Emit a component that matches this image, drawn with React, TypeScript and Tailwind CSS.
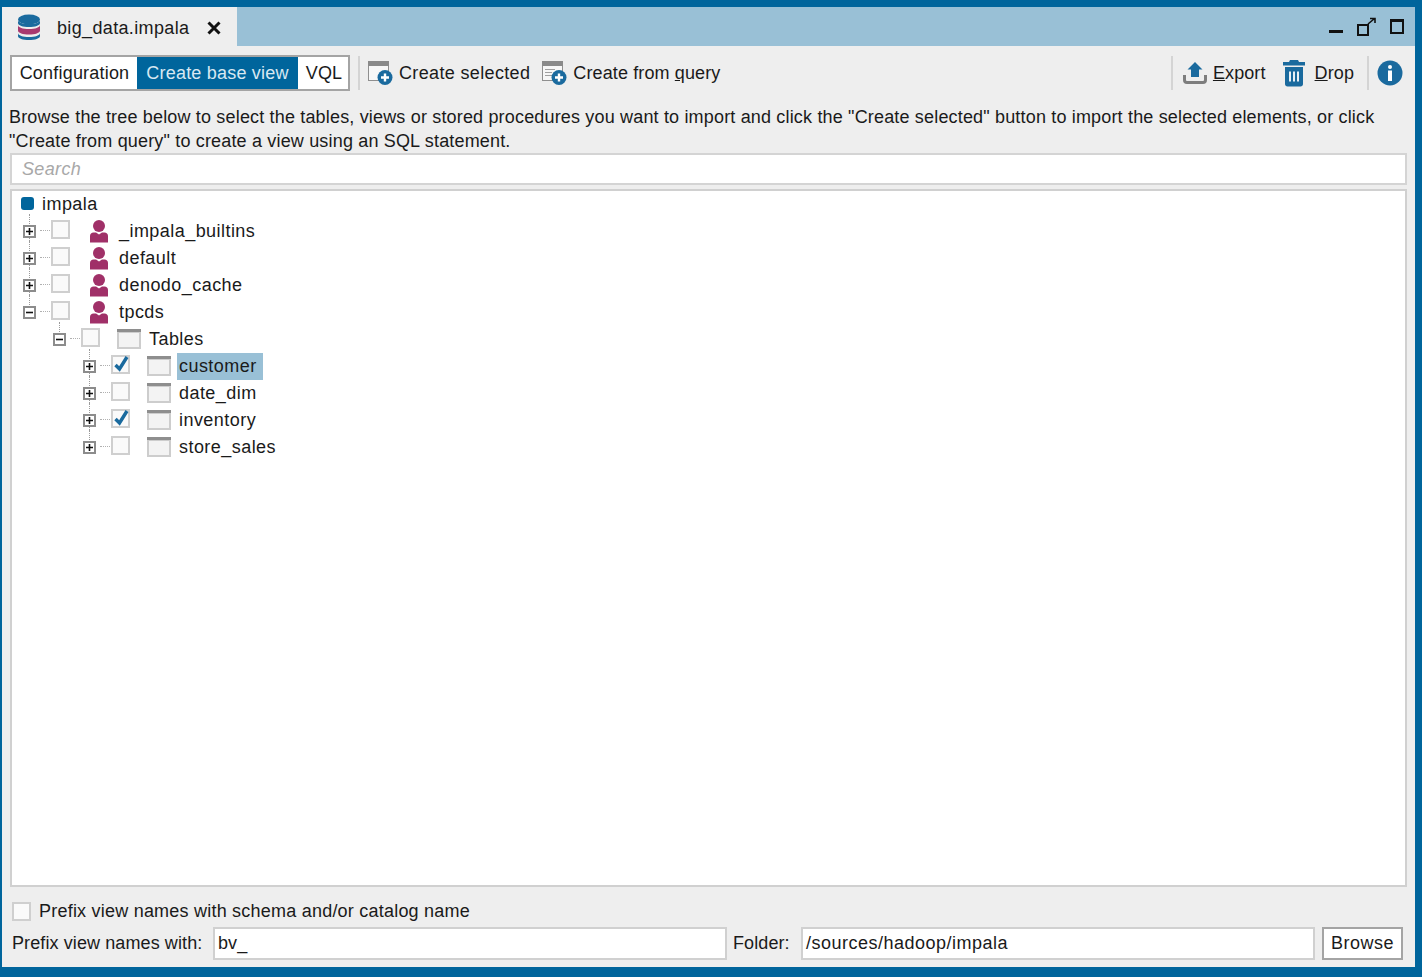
import { ReactNode } from 'react'

interface TreeNode {
  label: string
  level: number
  kind: 'schema' | 'table'
  open?: boolean
  checked?: boolean
  selected?: boolean
  // how far the dotted line reaches above the expander
  lineUp?: boolean
  lineDown?: boolean
}

const nodes: TreeNode[] = [
  { label: '_impala_builtins', level: 0, kind: 'schema', lineUp: true, lineDown: true },
  { label: 'default', level: 0, kind: 'schema', lineUp: true, lineDown: true },
  { label: 'denodo_cache', level: 0, kind: 'schema', lineUp: true, lineDown: true },
  { label: 'tpcds', level: 0, kind: 'schema', open: true, lineUp: true },
  { label: 'Tables', level: 1, kind: 'table', open: true, lineUp: true },
  { label: 'customer', level: 2, kind: 'table', checked: true, selected: true, lineUp: true, lineDown: true },
  { label: 'date_dim', level: 2, kind: 'table', lineUp: true, lineDown: true },
  { label: 'inventory', level: 2, kind: 'table', checked: true, lineUp: true, lineDown: true },
  { label: 'store_sales', level: 2, kind: 'table', lineUp: true },
]

function DatabaseIcon() {
  return (
    <svg width="24" height="28" viewBox="0 0 24 28">
      <path d="M1 20v3c0 2.500 5 4 11 4s11-1.500 11-4v-3c0 2.500-5 4-11 4S1 22.500 1 20z" fill="#1a6a9e" />
      <path d="M1 12v5.500c0 2.500 5 4 11 4s11-1.500 11-4V12c0 2.500-5 4-11 4S1 14.500 1 12z" fill="#a8396f" />
      <ellipse cx="12" cy="6.500" rx="11" ry="5" fill="#1a6a9e" />
      <path d="M1 7v3c0 2.500 5 4 11 4s11-1.500 11-4V7c0 2.500-5 4-11 4S1 9.500 1 7z" fill="#1a6a9e" />
    </svg>
  )
}

function SchemaIcon() {
  return (
    <svg width="20" height="24" viewBox="0 0 20 24">
      <circle cx="10" cy="6" r="6" fill="#a03068" />
      <path d="M1 22.500V16c0-2 1.500-3.500 3.500-3.500H7l3 2 3-2h2.500c2 0 3.500 1.500 3.500 3.500v6.500z" fill="#a03068" />
    </svg>
  )
}

function TableIcon() {
  return (
    <svg width="24" height="20" viewBox="0 0 24 20">
      <rect x="0" y="0" width="24" height="20" fill="#cdcdcd" />
      <rect x="0" y="0" width="24" height="3" fill="#8e8e8e" />
      <rect x="2" y="4" width="20" height="14" fill="#f3f3f3" />
    </svg>
  )
}

function PlusBadge({ x, y }: { x: number; y: number }) {
  return (
    <g transform={`translate(${x} ${y})`}>
      <circle r="7.500" fill="#1a6a9e" />
      <path d="M-4 0h8M0-4v8" stroke="#fff" strokeWidth="2.400" />
    </g>
  )
}

function CreateIcon({ lines }: { lines?: boolean }) {
  return (
    <svg width="26" height="26" viewBox="0 0 26 26">
      <rect x="0.500" y="1.500" width="20" height="19" fill="#f7f7f7" stroke="#8f8f8f" />
      <rect x="0" y="1" width="21" height="5" fill="#8a8a8a" />
      {lines && <path d="M3 9.500h10M3 12.500h7M3 15.500h9" stroke="#a0a0a0" strokeWidth="1" />}
      <PlusBadge x={17} y={17.500} />
    </svg>
  )
}

function ExportIcon() {
  return (
    <svg width="24" height="24" viewBox="0 0 24 24">
      <path d="M12 1l7.500 7.500H16V16H8V8.500H4.500z" fill="#1a6a9e" />
      <path d="M1.500 14v5c0 1.500 1 2.500 2.500 2.500h16c1.500 0 2.500-1 2.500-2.500v-5" fill="none" stroke="#7d7d7d" strokeWidth="3" />
    </svg>
  )
}

function TrashIcon() {
  return (
    <svg width="24" height="28" viewBox="0 0 24 28">
      <path d="M8 1h8l1 2h6v3.500H1V3h6z" fill="#1a6a9e" />
      <path d="M3 8h18v17c0 1.500-1 2.500-2.500 2.500h-13C4 27.500 3 26.500 3 25z" fill="#1a6a9e" />
      <path d="M8 12.500v10M12 12.500v10M16 12.500v10" stroke="#e8f0f5" strokeWidth="2" />
    </svg>
  )
}

function InfoIcon() {
  return (
    <svg width="26" height="26" viewBox="0 0 26 26">
      <circle cx="13" cy="13" r="12.500" fill="#1a6a9e" />
      <circle cx="13" cy="7" r="2" fill="#fff" />
      <rect x="11" y="10.500" width="4" height="10.500" fill="#fff" />
    </svg>
  )
}

function CheckBox({ checked }: { checked?: boolean }) {
  return (
    <span className="relative block h-[19px] w-[19px] border-2 border-[#cfcfcf] bg-[#fafafa]">
      {checked && (
        <svg className="absolute -top-[2px] left-0" width="18" height="18" viewBox="0 0 18 18">
          <path d="M2.500 10l4 4L14 2" fill="none" stroke="#1a6a9e" strokeWidth="3.400" />
        </svg>
      )}
    </span>
  )
}

function Expander({ open }: { open?: boolean }) {
  return (
    <span className="relative z-10 -mt-[1px] flex h-[13px] w-[13px] items-center justify-center border-2 border-[#8c8c8c] bg-white">
      <svg width="9" height="9" viewBox="0 0 9 9">
        <path d={open ? 'M1 4.500h7' : 'M1 4.500h7M4.500 1v7'} stroke="#111" strokeWidth="1.600" />
      </svg>
    </span>
  )
}

function TreeRow({ node }: { node: TreeNode }) {
  const schema = node.kind === 'schema'
  const indent = node.level === 0 ? 'pl-[11px]' : node.level === 1 ? 'pl-[41px]' : 'pl-[71px]'
  return (
    <div className={`flex h-[27px] items-center ${indent}`}>
      <span className="relative flex h-[27px] w-[17px] shrink-0 items-center">
        <Expander open={node.open} />
        {node.lineUp && (
          <span className="absolute left-[6px] top-[-4px] h-[12px] border-l border-dotted border-[#9a9a9a]" />
        )}
        {node.lineDown && (
          <span className="absolute left-[6px] top-[18px] h-[13px] border-l border-dotted border-[#9a9a9a]" />
        )}
      </span>
      <span className="mr-[1px] -mt-[2px] h-0 w-[10px] shrink-0 border-t border-dotted border-[#b0b0b0]" />
      <span className="-mt-[5px]">
        <CheckBox checked={node.checked} />
      </span>
      {schema ? (
        <span className="ml-[19px] mr-[8px] flex">
          <SchemaIcon />
        </span>
      ) : (
        <span className="-mt-[1px] ml-[17px] mr-[6px] flex">
          <TableIcon />
        </span>
      )}
      <span
        className={`flex h-[27px] items-center pl-[2px] pr-[6px] ${node.selected ? 'bg-[#99c0d6]' : ''}`}
      >
        {node.label}
      </span>
    </div>
  )
}

function ToolButton({ icon, children, gap }: { icon: ReactNode; children: ReactNode; gap: string }) {
  return (
    <div className={`flex items-center ${gap}`}>
      {icon}
      <span>{children}</span>
    </div>
  )
}

function Sep() {
  return <span className="block h-[34px] w-[2px] bg-[#d4d4d4]" />
}

export default function App() {
  return (
    <div className="h-[977px] w-[1422px] overflow-hidden bg-[#00659c] pb-[10px] pl-[2px] pr-[7px] pt-[7px] font-['Liberation_Sans',Arial,sans-serif] text-[18px] tracking-[0.35px] text-[#1a1a1a]">
      <div className="flex h-full flex-col bg-[#eeeeee]">
        {/* Tab strip */}
        <div className="flex h-[39px] shrink-0 items-stretch bg-[#99c0d6]">
          <div className="flex w-[235px] items-center bg-[#eeeeee] pl-[15px]">
            <DatabaseIcon />
            <span className="ml-[16px] pt-[3px]">big_data.impala</span>
            <svg className="ml-[18px] mt-[3px]" width="14" height="14" viewBox="0 0 14 14">
              <path d="M1.500 1.500l11 11M12.500 1.500l-11 11" stroke="#111" strokeWidth="3" />
            </svg>
          </div>
          <div className="ml-auto mr-[11px] flex items-center gap-[14px]">
            <svg width="14" height="18" viewBox="0 0 14 18">
              <rect x="0" y="12" width="14" height="3" fill="#111" />
            </svg>
            <svg width="19" height="20" viewBox="0 0 19 20">
              <rect x="1" y="8" width="10" height="10" fill="none" stroke="#111" strokeWidth="2" />
              <path d="M11 7l6-5M13 1.500h5V6" fill="none" stroke="#111" strokeWidth="1.600" />
            </svg>
            <svg width="14" height="15" viewBox="0 0 14 15">
              <rect x="1" y="1.500" width="12" height="12.500" fill="none" stroke="#111" strokeWidth="2" />
              <rect x="0" y="0" width="14" height="3" fill="#111" />
            </svg>
          </div>
        </div>

        {/* Toolbar */}
        <div className="flex h-[54px] shrink-0 items-center pl-[8px] pr-[12px]">
          <div className="flex h-[36px] items-stretch border-2 border-[#a4a4a4] bg-white tracking-[0.2px]">
            <div className="flex w-[125px] items-center justify-center">Configuration</div>
            <div className="flex w-[161px] items-center justify-center bg-[#00659c] text-[#d8e8f2]">
              Create base view
            </div>
            <div className="flex w-[50px] items-center justify-center pl-[2px]">VQL</div>
          </div>
          <span className="ml-[8px]">
            <Sep />
          </span>
          <div className="ml-[8px] flex items-center gap-[12px]">
            <ToolButton icon={<CreateIcon />} gap="gap-[5px]">
              Create selected
            </ToolButton>
            <span className="tracking-[0.12px]">
              <ToolButton icon={<CreateIcon lines />} gap="gap-[5px]">
                Create from <span className="underline">q</span>uery
              </ToolButton>
            </span>
          </div>
          <div className="ml-auto flex items-center gap-[8px] tracking-[0.1px]">
            <Sep />
            <span className="ml-[2px]">
              <ToolButton icon={<ExportIcon />} gap="gap-[6px]">
                <span className="underline">E</span>xport
              </ToolButton>
            </span>
            <span className="ml-[8px]">
              <ToolButton icon={<TrashIcon />} gap="gap-[9px]">
                <span className="underline">D</span>rop
              </ToolButton>
            </span>
            <span className="ml-[5px]">
              <Sep />
            </span>
            <InfoIcon />
          </div>
        </div>

        {/* Help text */}
        <p className="mt-[5px] shrink-0 whitespace-nowrap pl-[7px] leading-[24px] tracking-[0.17px]">
          Browse the tree below to select the tables, views or stored procedures you want to import and click the
          "Create selected" button to import the selected elements, or click
          <br />
          "Create from query" to create a view using an SQL statement.
        </p>

        {/* Search */}
        <div className="mx-[8px] flex h-[32px] shrink-0 items-center border-2 border-[#d4d4d4] bg-white pl-[10px] italic text-[#a8a8a8]">
          Search
        </div>

        {/* Tree */}
        <div className="mx-[8px] mt-[4px] min-h-0 flex-1 border-2 border-[#d0d0d0] bg-white tracking-[0.45px]">
          <div className="flex h-[27px] items-center pl-[9px]">
            <span className="-mt-[3px] h-[13px] w-[13px] rounded-[3px] bg-[#00659c]" />
            <span className="ml-[8px]">impala</span>
          </div>
          {nodes.map((node) => (
            <TreeRow key={node.label} node={node} />
          ))}
        </div>

        {/* Footer */}
        <div className="flex h-[40px] shrink-0 items-center pl-[10px] pt-[8px] tracking-[0.22px]">
          <CheckBox />
          <span className="ml-[8px]">Prefix view names with schema and/or catalog name</span>
        </div>
        <div className="mb-[7px] flex h-[33px] shrink-0 items-center pl-[10px] pr-[12px] tracking-[0.1px]">
          <span className="w-[190px] whitespace-nowrap">Prefix view names with:</span>
          <div className="ml-[11px] flex h-[33px] w-[514px] items-center border-2 border-[#d0d0d0] bg-white pl-[3px]">
            bv_
          </div>
          <span className="ml-[6px] w-[57px]">Folder:</span>
          <div className="ml-[11px] flex h-[33px] flex-1 items-center border-2 border-[#d0d0d0] bg-white pl-[3px] tracking-[0.5px]">
            /sources/hadoop/impala
          </div>
          <div className="ml-[7px] flex h-[33px] w-[81px] items-center justify-center border-2 border-[#a4a4a4] bg-white tracking-[0.5px]">
            Browse
          </div>
        </div>
      </div>
    </div>
  )
}
